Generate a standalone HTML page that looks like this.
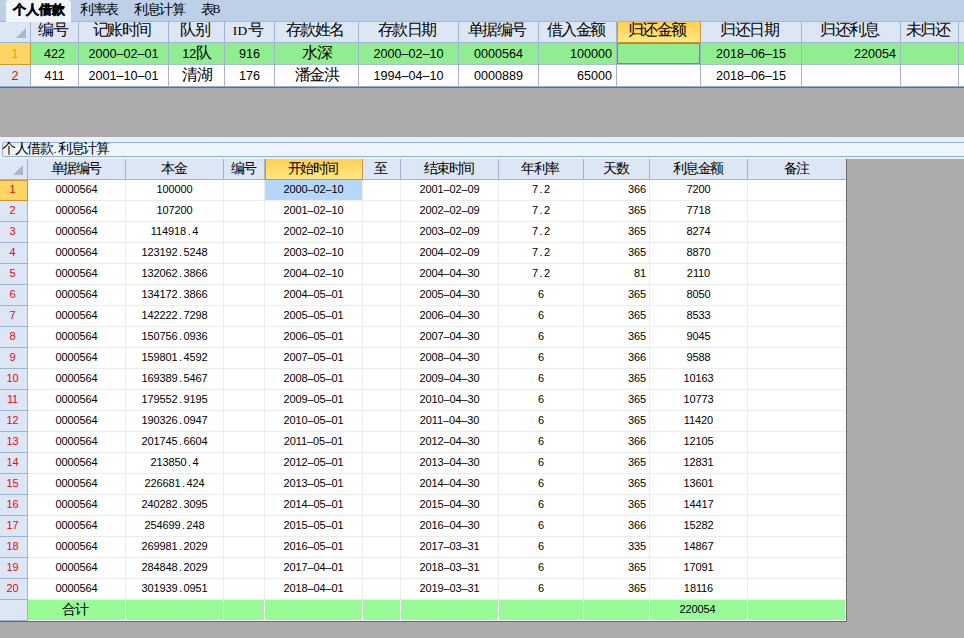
<!DOCTYPE html><html><head><meta charset="utf-8"><style>
html,body{margin:0;padding:0}
body{width:964px;height:638px;overflow:hidden;background:#ABABAB;position:relative;font-family:"Liberation Sans",sans-serif;color:#000}
body>div{position:absolute;white-space:nowrap}
.t12{font-size:13.5px;line-height:20px;letter-spacing:-1.5px}
.t12b{font-size:13px;line-height:16px;font-weight:bold;letter-spacing:0px;-webkit-text-stroke:0.5px #000}
.t14{font-size:15.5px;line-height:20px;letter-spacing:-1.5px}
.m14{font-size:12.6px;letter-spacing:0px;line-height:22px}
.m12{font-size:11px;letter-spacing:-0.1px;line-height:20px}
.m14 i{display:inline-block;width:7px;text-align:center;font-style:normal}
.m12 i{display:inline-block;width:6px;text-align:center;font-style:normal}
.sID{font-family:"Liberation Serif",serif;font-size:13.5px;letter-spacing:0.5px}
.mB{font-family:"Liberation Serif",serif;font-size:12px;letter-spacing:0;position:relative;top:-1px;left:-1px}
</style></head><body>
<div style="left:0px;top:0px;width:964px;height:21px;background:#BED0E8"></div>
<div style="left:0px;top:21px;width:964px;height:1px;background:#A9B6C6"></div>
<div style="left:6px;top:0;width:65px;height:22px;background:#F2F6FC;clip-path:polygon(2px 0,63px 0,65px 2px,65px 22px,0 22px,0 2px)"></div>
<div class="t12b" style="left:13px;top:2px">个人借款</div>
<div class="t12" style="left:80px;top:0px">利率表</div>
<div class="t12" style="left:134px;top:0px">利息计算</div>
<div class="t12" style="left:201px;top:0px">表<span class="mB">B</span></div>
<div style="left:0px;top:22px;width:964px;height:20px;background:#DCE6F4"></div>
<div style="left:0px;top:42px;width:964px;height:1px;background:#9EB4D0"></div>
<svg style="position:absolute;left:0;top:22px" width="30" height="20"><polygon points="16,16 26,16 26,6" fill="#A8B8D2"/></svg>
<div style="left:31px;top:43px;width:933px;height:21px;background:#90EE90"></div>
<div style="left:31px;top:65px;width:933px;height:21px;background:#fff"></div>
<div style="left:0px;top:64px;width:964px;height:1px;background:#A9BED9"></div>
<div style="left:0px;top:86px;width:964px;height:1px;background:#8FB0DA"></div>
<div style="left:0px;top:87px;width:964px;height:1px;background:#6E6E6E"></div>
<div style="left:0px;top:65px;width:30px;height:21px;background:#DCE6F4"></div>
<div style="left:30px;top:22px;width:1px;height:65px;background:#9EB4D0"></div>
<div style="left:78px;top:22px;width:1px;height:65px;background:#9EB4D0"></div>
<div style="left:168px;top:22px;width:1px;height:65px;background:#9EB4D0"></div>
<div style="left:224px;top:22px;width:1px;height:65px;background:#9EB4D0"></div>
<div style="left:274px;top:22px;width:1px;height:65px;background:#9EB4D0"></div>
<div style="left:358px;top:22px;width:1px;height:65px;background:#9EB4D0"></div>
<div style="left:458px;top:22px;width:1px;height:65px;background:#9EB4D0"></div>
<div style="left:538px;top:22px;width:1px;height:65px;background:#9EB4D0"></div>
<div style="left:616px;top:22px;width:1px;height:65px;background:#9EB4D0"></div>
<div style="left:700px;top:22px;width:1px;height:65px;background:#9EB4D0"></div>
<div style="left:801px;top:22px;width:1px;height:65px;background:#9EB4D0"></div>
<div style="left:900px;top:22px;width:1px;height:65px;background:#9EB4D0"></div>
<div style="left:958px;top:22px;width:1px;height:65px;background:#9EB4D0"></div>
<div style="left:0px;top:43px;width:31px;height:22px;background:#FFD666;box-sizing:border-box;border-bottom:1px solid #D4952E;border-right:1px solid #D4952E"></div>
<div style="left:617px;top:22px;width:84px;height:21px;background:linear-gradient(#FFCF52,#FFE884);box-sizing:border-box;border:1px solid #D4952E;border-top:none"></div>
<div class="t14" style="left:29px;top:20px;width:47px;text-align:center">编号</div>
<div class="t14" style="left:77px;top:20px;width:89px;text-align:center">记账时间</div>
<div class="t14" style="left:167px;top:20px;width:55px;text-align:center">队别</div>
<div class="t14" style="left:223px;top:20px;width:49px;text-align:center"><span class="sID">ID</span>号</div>
<div class="t14" style="left:273px;top:20px;width:83px;text-align:center">存款姓名</div>
<div class="t14" style="left:357px;top:20px;width:99px;text-align:center">存款日期</div>
<div class="t14" style="left:457px;top:20px;width:79px;text-align:center">单据编号</div>
<div class="t14" style="left:537px;top:20px;width:77px;text-align:center">借入金额</div>
<div class="t14" style="left:615px;top:20px;width:83px;text-align:center">归还金额</div>
<div class="t14" style="left:699px;top:20px;width:100px;text-align:center">归还日期</div>
<div class="t14" style="left:800px;top:20px;width:98px;text-align:center">归还利息</div>
<div class="t14" style="left:899px;top:20px;width:57px;text-align:center">未归还</div>
<div style="left:617px;top:43px;width:83px;height:21px;box-sizing:border-box;border:1px solid #3D95E8"></div>
<div class="m14" style="left:0;top:43px;width:30px;text-align:center;color:#F5A000">1</div>
<div class="m14" style="left:0;top:65px;width:30px;text-align:center;color:#FF0000">2</div>
<div class="t14" style="left:31px;top:43px;width:47px;text-align:center"><span class="m14">422</span></div>
<div class="t14" style="left:79px;top:43px;width:89px;text-align:center"><span class="m14">2000<i>&#8211;</i>02<i>&#8211;</i>01</span></div>
<div class="t14" style="left:169px;top:43px;width:55px;text-align:center"><span class="m14">12</span>队</div>
<div class="t14" style="left:225px;top:43px;width:49px;text-align:center"><span class="m14">916</span></div>
<div class="t14" style="left:275px;top:43px;width:83px;text-align:center">水深</div>
<div class="t14" style="left:359px;top:43px;width:99px;text-align:center"><span class="m14">2000<i>&#8211;</i>02<i>&#8211;</i>10</span></div>
<div class="t14" style="left:459px;top:43px;width:79px;text-align:center"><span class="m14">0000564</span></div>
<div class="t14" style="left:539px;top:43px;width:77px;text-align:right;padding-right:4px;box-sizing:border-box"><span class="m14">100000</span></div>
<div class="t14" style="left:701px;top:43px;width:100px;text-align:center"><span class="m14">2018<i>&#8211;</i>06<i>&#8211;</i>15</span></div>
<div class="t14" style="left:802px;top:43px;width:98px;text-align:right;padding-right:4px;box-sizing:border-box"><span class="m14">220054</span></div>
<div class="t14" style="left:31px;top:65px;width:47px;text-align:center"><span class="m14">411</span></div>
<div class="t14" style="left:79px;top:65px;width:89px;text-align:center"><span class="m14">2001<i>&#8211;</i>10<i>&#8211;</i>01</span></div>
<div class="t14" style="left:169px;top:65px;width:55px;text-align:center">清湖</div>
<div class="t14" style="left:225px;top:65px;width:49px;text-align:center"><span class="m14">176</span></div>
<div class="t14" style="left:275px;top:65px;width:83px;text-align:center">潘金洪</div>
<div class="t14" style="left:359px;top:65px;width:99px;text-align:center"><span class="m14">1994<i>&#8211;</i>04<i>&#8211;</i>10</span></div>
<div class="t14" style="left:459px;top:65px;width:79px;text-align:center"><span class="m14">0000889</span></div>
<div class="t14" style="left:539px;top:65px;width:77px;text-align:right;padding-right:4px;box-sizing:border-box"><span class="m14">65000</span></div>
<div class="t14" style="left:701px;top:65px;width:100px;text-align:center"><span class="m14">2018<i>&#8211;</i>06<i>&#8211;</i>15</span></div>
<div style="left:0px;top:137px;width:964px;height:22px;background:#EAF1FB"></div>
<div style="left:2px;top:142px;width:970px;height:15px;box-sizing:border-box;border:1px solid #8DB2E3;border-radius:2px;background:#EEF4FC"></div>
<div class="t12" style="left:2px;top:139px">个人借款<span class="m12"><i>.</i></span>利息计算</div>
<div style="left:0px;top:159px;width:846px;height:20px;background:#DCE6F4"></div>
<div style="left:0px;top:179px;width:846px;height:1px;background:#9EB4D0"></div>
<svg style="position:absolute;left:0;top:159px" width="27" height="20"><polygon points="13,16 23,16 23,6" fill="#A8B8D2"/></svg>
<div style="left:28px;top:180px;width:818px;height:420px;background:#fff"></div>
<div style="left:0px;top:180px;width:27px;height:441px;background:#DCE6F4"></div>
<div style="left:28px;top:200px;width:818px;height:1px;background:#ECECEC"></div>
<div style="left:0px;top:200px;width:27px;height:1px;background:#9EB4D0"></div>
<div style="left:28px;top:221px;width:818px;height:1px;background:#ECECEC"></div>
<div style="left:0px;top:221px;width:27px;height:1px;background:#9EB4D0"></div>
<div style="left:28px;top:242px;width:818px;height:1px;background:#ECECEC"></div>
<div style="left:0px;top:242px;width:27px;height:1px;background:#9EB4D0"></div>
<div style="left:28px;top:263px;width:818px;height:1px;background:#ECECEC"></div>
<div style="left:0px;top:263px;width:27px;height:1px;background:#9EB4D0"></div>
<div style="left:28px;top:284px;width:818px;height:1px;background:#ECECEC"></div>
<div style="left:0px;top:284px;width:27px;height:1px;background:#9EB4D0"></div>
<div style="left:28px;top:305px;width:818px;height:1px;background:#ECECEC"></div>
<div style="left:0px;top:305px;width:27px;height:1px;background:#9EB4D0"></div>
<div style="left:28px;top:326px;width:818px;height:1px;background:#ECECEC"></div>
<div style="left:0px;top:326px;width:27px;height:1px;background:#9EB4D0"></div>
<div style="left:28px;top:347px;width:818px;height:1px;background:#ECECEC"></div>
<div style="left:0px;top:347px;width:27px;height:1px;background:#9EB4D0"></div>
<div style="left:28px;top:368px;width:818px;height:1px;background:#ECECEC"></div>
<div style="left:0px;top:368px;width:27px;height:1px;background:#9EB4D0"></div>
<div style="left:28px;top:389px;width:818px;height:1px;background:#ECECEC"></div>
<div style="left:0px;top:389px;width:27px;height:1px;background:#9EB4D0"></div>
<div style="left:28px;top:410px;width:818px;height:1px;background:#ECECEC"></div>
<div style="left:0px;top:410px;width:27px;height:1px;background:#9EB4D0"></div>
<div style="left:28px;top:431px;width:818px;height:1px;background:#ECECEC"></div>
<div style="left:0px;top:431px;width:27px;height:1px;background:#9EB4D0"></div>
<div style="left:28px;top:452px;width:818px;height:1px;background:#ECECEC"></div>
<div style="left:0px;top:452px;width:27px;height:1px;background:#9EB4D0"></div>
<div style="left:28px;top:473px;width:818px;height:1px;background:#ECECEC"></div>
<div style="left:0px;top:473px;width:27px;height:1px;background:#9EB4D0"></div>
<div style="left:28px;top:494px;width:818px;height:1px;background:#ECECEC"></div>
<div style="left:0px;top:494px;width:27px;height:1px;background:#9EB4D0"></div>
<div style="left:28px;top:515px;width:818px;height:1px;background:#ECECEC"></div>
<div style="left:0px;top:515px;width:27px;height:1px;background:#9EB4D0"></div>
<div style="left:28px;top:536px;width:818px;height:1px;background:#ECECEC"></div>
<div style="left:0px;top:536px;width:27px;height:1px;background:#9EB4D0"></div>
<div style="left:28px;top:557px;width:818px;height:1px;background:#ECECEC"></div>
<div style="left:0px;top:557px;width:27px;height:1px;background:#9EB4D0"></div>
<div style="left:28px;top:578px;width:818px;height:1px;background:#ECECEC"></div>
<div style="left:0px;top:578px;width:27px;height:1px;background:#9EB4D0"></div>
<div style="left:28px;top:599px;width:818px;height:1px;background:#ECECEC"></div>
<div style="left:0px;top:599px;width:27px;height:1px;background:#9EB4D0"></div>
<div style="left:28px;top:600px;width:818px;height:20px;background:#98FB98"></div>
<div style="left:28px;top:620px;width:818px;height:1px;background:#fff"></div>
<div style="left:0px;top:620px;width:27px;height:1px;background:#9EB4D0"></div>
<div style="left:125px;top:159px;width:1px;height:21px;background:#9EB4D0"></div>
<div style="left:125px;top:180px;width:1px;height:420px;background:#ECECEC"></div>
<div style="left:125px;top:600px;width:1px;height:20px;background:#fff"></div>
<div style="left:223px;top:159px;width:1px;height:21px;background:#9EB4D0"></div>
<div style="left:223px;top:180px;width:1px;height:420px;background:#ECECEC"></div>
<div style="left:223px;top:600px;width:1px;height:20px;background:#fff"></div>
<div style="left:264px;top:159px;width:1px;height:21px;background:#9EB4D0"></div>
<div style="left:264px;top:180px;width:1px;height:420px;background:#ECECEC"></div>
<div style="left:264px;top:600px;width:1px;height:20px;background:#fff"></div>
<div style="left:362px;top:159px;width:1px;height:21px;background:#9EB4D0"></div>
<div style="left:362px;top:180px;width:1px;height:420px;background:#ECECEC"></div>
<div style="left:362px;top:600px;width:1px;height:20px;background:#fff"></div>
<div style="left:400px;top:159px;width:1px;height:21px;background:#9EB4D0"></div>
<div style="left:400px;top:180px;width:1px;height:420px;background:#ECECEC"></div>
<div style="left:400px;top:600px;width:1px;height:20px;background:#fff"></div>
<div style="left:498px;top:159px;width:1px;height:21px;background:#9EB4D0"></div>
<div style="left:498px;top:180px;width:1px;height:420px;background:#ECECEC"></div>
<div style="left:498px;top:600px;width:1px;height:20px;background:#fff"></div>
<div style="left:583px;top:159px;width:1px;height:21px;background:#9EB4D0"></div>
<div style="left:583px;top:180px;width:1px;height:420px;background:#ECECEC"></div>
<div style="left:583px;top:600px;width:1px;height:20px;background:#fff"></div>
<div style="left:649px;top:159px;width:1px;height:21px;background:#9EB4D0"></div>
<div style="left:649px;top:180px;width:1px;height:420px;background:#ECECEC"></div>
<div style="left:649px;top:600px;width:1px;height:20px;background:#fff"></div>
<div style="left:747px;top:159px;width:1px;height:21px;background:#9EB4D0"></div>
<div style="left:747px;top:180px;width:1px;height:420px;background:#ECECEC"></div>
<div style="left:747px;top:600px;width:1px;height:20px;background:#fff"></div>
<div style="left:845px;top:600px;width:1px;height:21px;background:#fff"></div>
<div style="left:27px;top:159px;width:1px;height:462px;background:#9EB4D0"></div>
<div style="left:265px;top:159px;width:98px;height:21px;background:linear-gradient(#FFCF52,#FFE884);box-sizing:border-box;border:1px solid #D4952E;border-top:none"></div>
<div style="left:0px;top:180px;width:28px;height:21px;background:#FFD666;box-sizing:border-box;border:1px solid #D4952E;border-left:none"></div>
<div style="left:265px;top:180px;width:97px;height:20px;background:#B5D7FA"></div>
<div style="left:846px;top:159px;width:1px;height:463px;background:#6A6A6A"></div>
<div style="left:0px;top:621px;width:847px;height:1px;background:#6A6A6A"></div>
<div class="t12" style="left:27px;top:159px;width:97px;text-align:center">单据编号</div>
<div class="t12" style="left:125px;top:159px;width:97px;text-align:center">本金</div>
<div class="t12" style="left:223px;top:159px;width:40px;text-align:center">编号</div>
<div class="t12" style="left:264px;top:159px;width:97px;text-align:center">开始时间</div>
<div class="t12" style="left:362px;top:159px;width:37px;text-align:center">至</div>
<div class="t12" style="left:400px;top:159px;width:97px;text-align:center">结束时间</div>
<div class="t12" style="left:498px;top:159px;width:84px;text-align:center">年利率</div>
<div class="t12" style="left:583px;top:159px;width:65px;text-align:center">天数</div>
<div class="t12" style="left:649px;top:159px;width:97px;text-align:center">利息金额</div>
<div class="t12" style="left:747px;top:159px;width:98px;text-align:center">备注</div>
<div class="m12" style="left:-1px;top:179px;width:27px;text-align:center;color:#FF0000">1</div>
<div class="t12" style="left:28px;top:179px;width:97px;text-align:center"><span class="m12">0000564</span></div>
<div class="t12" style="left:126px;top:179px;width:97px;text-align:center"><span class="m12">100000</span></div>
<div class="t12" style="left:265px;top:179px;width:97px;text-align:center"><span class="m12">2000<i>&#8211;</i>02<i>&#8211;</i>10</span></div>
<div class="t12" style="left:401px;top:179px;width:97px;text-align:center"><span class="m12">2001<i>&#8211;</i>02<i>&#8211;</i>09</span></div>
<div class="t12" style="left:499px;top:179px;width:84px;text-align:center"><span class="m12">7<i>.</i>2</span></div>
<div class="t12" style="left:584px;top:179px;width:65px;text-align:right;padding-right:3px;box-sizing:border-box"><span class="m12">366</span></div>
<div class="t12" style="left:650px;top:179px;width:97px;text-align:center"><span class="m12">7200</span></div>
<div class="m12" style="left:-1px;top:200px;width:27px;text-align:center;color:#FF0000">2</div>
<div class="t12" style="left:28px;top:200px;width:97px;text-align:center"><span class="m12">0000564</span></div>
<div class="t12" style="left:126px;top:200px;width:97px;text-align:center"><span class="m12">107200</span></div>
<div class="t12" style="left:265px;top:200px;width:97px;text-align:center"><span class="m12">2001<i>&#8211;</i>02<i>&#8211;</i>10</span></div>
<div class="t12" style="left:401px;top:200px;width:97px;text-align:center"><span class="m12">2002<i>&#8211;</i>02<i>&#8211;</i>09</span></div>
<div class="t12" style="left:499px;top:200px;width:84px;text-align:center"><span class="m12">7<i>.</i>2</span></div>
<div class="t12" style="left:584px;top:200px;width:65px;text-align:right;padding-right:3px;box-sizing:border-box"><span class="m12">365</span></div>
<div class="t12" style="left:650px;top:200px;width:97px;text-align:center"><span class="m12">7718</span></div>
<div class="m12" style="left:-1px;top:221px;width:27px;text-align:center;color:#FF0000">3</div>
<div class="t12" style="left:28px;top:221px;width:97px;text-align:center"><span class="m12">0000564</span></div>
<div class="t12" style="left:126px;top:221px;width:97px;text-align:center"><span class="m12">114918<i>.</i>4</span></div>
<div class="t12" style="left:265px;top:221px;width:97px;text-align:center"><span class="m12">2002<i>&#8211;</i>02<i>&#8211;</i>10</span></div>
<div class="t12" style="left:401px;top:221px;width:97px;text-align:center"><span class="m12">2003<i>&#8211;</i>02<i>&#8211;</i>09</span></div>
<div class="t12" style="left:499px;top:221px;width:84px;text-align:center"><span class="m12">7<i>.</i>2</span></div>
<div class="t12" style="left:584px;top:221px;width:65px;text-align:right;padding-right:3px;box-sizing:border-box"><span class="m12">365</span></div>
<div class="t12" style="left:650px;top:221px;width:97px;text-align:center"><span class="m12">8274</span></div>
<div class="m12" style="left:-1px;top:242px;width:27px;text-align:center;color:#FF0000">4</div>
<div class="t12" style="left:28px;top:242px;width:97px;text-align:center"><span class="m12">0000564</span></div>
<div class="t12" style="left:126px;top:242px;width:97px;text-align:center"><span class="m12">123192<i>.</i>5248</span></div>
<div class="t12" style="left:265px;top:242px;width:97px;text-align:center"><span class="m12">2003<i>&#8211;</i>02<i>&#8211;</i>10</span></div>
<div class="t12" style="left:401px;top:242px;width:97px;text-align:center"><span class="m12">2004<i>&#8211;</i>02<i>&#8211;</i>09</span></div>
<div class="t12" style="left:499px;top:242px;width:84px;text-align:center"><span class="m12">7<i>.</i>2</span></div>
<div class="t12" style="left:584px;top:242px;width:65px;text-align:right;padding-right:3px;box-sizing:border-box"><span class="m12">365</span></div>
<div class="t12" style="left:650px;top:242px;width:97px;text-align:center"><span class="m12">8870</span></div>
<div class="m12" style="left:-1px;top:263px;width:27px;text-align:center;color:#FF0000">5</div>
<div class="t12" style="left:28px;top:263px;width:97px;text-align:center"><span class="m12">0000564</span></div>
<div class="t12" style="left:126px;top:263px;width:97px;text-align:center"><span class="m12">132062<i>.</i>3866</span></div>
<div class="t12" style="left:265px;top:263px;width:97px;text-align:center"><span class="m12">2004<i>&#8211;</i>02<i>&#8211;</i>10</span></div>
<div class="t12" style="left:401px;top:263px;width:97px;text-align:center"><span class="m12">2004<i>&#8211;</i>04<i>&#8211;</i>30</span></div>
<div class="t12" style="left:499px;top:263px;width:84px;text-align:center"><span class="m12">7<i>.</i>2</span></div>
<div class="t12" style="left:584px;top:263px;width:65px;text-align:right;padding-right:3px;box-sizing:border-box"><span class="m12">81</span></div>
<div class="t12" style="left:650px;top:263px;width:97px;text-align:center"><span class="m12">2110</span></div>
<div class="m12" style="left:-1px;top:284px;width:27px;text-align:center;color:#FF0000">6</div>
<div class="t12" style="left:28px;top:284px;width:97px;text-align:center"><span class="m12">0000564</span></div>
<div class="t12" style="left:126px;top:284px;width:97px;text-align:center"><span class="m12">134172<i>.</i>3866</span></div>
<div class="t12" style="left:265px;top:284px;width:97px;text-align:center"><span class="m12">2004<i>&#8211;</i>05<i>&#8211;</i>01</span></div>
<div class="t12" style="left:401px;top:284px;width:97px;text-align:center"><span class="m12">2005<i>&#8211;</i>04<i>&#8211;</i>30</span></div>
<div class="t12" style="left:499px;top:284px;width:84px;text-align:center"><span class="m12">6</span></div>
<div class="t12" style="left:584px;top:284px;width:65px;text-align:right;padding-right:3px;box-sizing:border-box"><span class="m12">365</span></div>
<div class="t12" style="left:650px;top:284px;width:97px;text-align:center"><span class="m12">8050</span></div>
<div class="m12" style="left:-1px;top:305px;width:27px;text-align:center;color:#FF0000">7</div>
<div class="t12" style="left:28px;top:305px;width:97px;text-align:center"><span class="m12">0000564</span></div>
<div class="t12" style="left:126px;top:305px;width:97px;text-align:center"><span class="m12">142222<i>.</i>7298</span></div>
<div class="t12" style="left:265px;top:305px;width:97px;text-align:center"><span class="m12">2005<i>&#8211;</i>05<i>&#8211;</i>01</span></div>
<div class="t12" style="left:401px;top:305px;width:97px;text-align:center"><span class="m12">2006<i>&#8211;</i>04<i>&#8211;</i>30</span></div>
<div class="t12" style="left:499px;top:305px;width:84px;text-align:center"><span class="m12">6</span></div>
<div class="t12" style="left:584px;top:305px;width:65px;text-align:right;padding-right:3px;box-sizing:border-box"><span class="m12">365</span></div>
<div class="t12" style="left:650px;top:305px;width:97px;text-align:center"><span class="m12">8533</span></div>
<div class="m12" style="left:-1px;top:326px;width:27px;text-align:center;color:#FF0000">8</div>
<div class="t12" style="left:28px;top:326px;width:97px;text-align:center"><span class="m12">0000564</span></div>
<div class="t12" style="left:126px;top:326px;width:97px;text-align:center"><span class="m12">150756<i>.</i>0936</span></div>
<div class="t12" style="left:265px;top:326px;width:97px;text-align:center"><span class="m12">2006<i>&#8211;</i>05<i>&#8211;</i>01</span></div>
<div class="t12" style="left:401px;top:326px;width:97px;text-align:center"><span class="m12">2007<i>&#8211;</i>04<i>&#8211;</i>30</span></div>
<div class="t12" style="left:499px;top:326px;width:84px;text-align:center"><span class="m12">6</span></div>
<div class="t12" style="left:584px;top:326px;width:65px;text-align:right;padding-right:3px;box-sizing:border-box"><span class="m12">365</span></div>
<div class="t12" style="left:650px;top:326px;width:97px;text-align:center"><span class="m12">9045</span></div>
<div class="m12" style="left:-1px;top:347px;width:27px;text-align:center;color:#FF0000">9</div>
<div class="t12" style="left:28px;top:347px;width:97px;text-align:center"><span class="m12">0000564</span></div>
<div class="t12" style="left:126px;top:347px;width:97px;text-align:center"><span class="m12">159801<i>.</i>4592</span></div>
<div class="t12" style="left:265px;top:347px;width:97px;text-align:center"><span class="m12">2007<i>&#8211;</i>05<i>&#8211;</i>01</span></div>
<div class="t12" style="left:401px;top:347px;width:97px;text-align:center"><span class="m12">2008<i>&#8211;</i>04<i>&#8211;</i>30</span></div>
<div class="t12" style="left:499px;top:347px;width:84px;text-align:center"><span class="m12">6</span></div>
<div class="t12" style="left:584px;top:347px;width:65px;text-align:right;padding-right:3px;box-sizing:border-box"><span class="m12">366</span></div>
<div class="t12" style="left:650px;top:347px;width:97px;text-align:center"><span class="m12">9588</span></div>
<div class="m12" style="left:-1px;top:368px;width:27px;text-align:center;color:#FF0000">10</div>
<div class="t12" style="left:28px;top:368px;width:97px;text-align:center"><span class="m12">0000564</span></div>
<div class="t12" style="left:126px;top:368px;width:97px;text-align:center"><span class="m12">169389<i>.</i>5467</span></div>
<div class="t12" style="left:265px;top:368px;width:97px;text-align:center"><span class="m12">2008<i>&#8211;</i>05<i>&#8211;</i>01</span></div>
<div class="t12" style="left:401px;top:368px;width:97px;text-align:center"><span class="m12">2009<i>&#8211;</i>04<i>&#8211;</i>30</span></div>
<div class="t12" style="left:499px;top:368px;width:84px;text-align:center"><span class="m12">6</span></div>
<div class="t12" style="left:584px;top:368px;width:65px;text-align:right;padding-right:3px;box-sizing:border-box"><span class="m12">365</span></div>
<div class="t12" style="left:650px;top:368px;width:97px;text-align:center"><span class="m12">10163</span></div>
<div class="m12" style="left:-1px;top:389px;width:27px;text-align:center;color:#FF0000">11</div>
<div class="t12" style="left:28px;top:389px;width:97px;text-align:center"><span class="m12">0000564</span></div>
<div class="t12" style="left:126px;top:389px;width:97px;text-align:center"><span class="m12">179552<i>.</i>9195</span></div>
<div class="t12" style="left:265px;top:389px;width:97px;text-align:center"><span class="m12">2009<i>&#8211;</i>05<i>&#8211;</i>01</span></div>
<div class="t12" style="left:401px;top:389px;width:97px;text-align:center"><span class="m12">2010<i>&#8211;</i>04<i>&#8211;</i>30</span></div>
<div class="t12" style="left:499px;top:389px;width:84px;text-align:center"><span class="m12">6</span></div>
<div class="t12" style="left:584px;top:389px;width:65px;text-align:right;padding-right:3px;box-sizing:border-box"><span class="m12">365</span></div>
<div class="t12" style="left:650px;top:389px;width:97px;text-align:center"><span class="m12">10773</span></div>
<div class="m12" style="left:-1px;top:410px;width:27px;text-align:center;color:#FF0000">12</div>
<div class="t12" style="left:28px;top:410px;width:97px;text-align:center"><span class="m12">0000564</span></div>
<div class="t12" style="left:126px;top:410px;width:97px;text-align:center"><span class="m12">190326<i>.</i>0947</span></div>
<div class="t12" style="left:265px;top:410px;width:97px;text-align:center"><span class="m12">2010<i>&#8211;</i>05<i>&#8211;</i>01</span></div>
<div class="t12" style="left:401px;top:410px;width:97px;text-align:center"><span class="m12">2011<i>&#8211;</i>04<i>&#8211;</i>30</span></div>
<div class="t12" style="left:499px;top:410px;width:84px;text-align:center"><span class="m12">6</span></div>
<div class="t12" style="left:584px;top:410px;width:65px;text-align:right;padding-right:3px;box-sizing:border-box"><span class="m12">365</span></div>
<div class="t12" style="left:650px;top:410px;width:97px;text-align:center"><span class="m12">11420</span></div>
<div class="m12" style="left:-1px;top:431px;width:27px;text-align:center;color:#FF0000">13</div>
<div class="t12" style="left:28px;top:431px;width:97px;text-align:center"><span class="m12">0000564</span></div>
<div class="t12" style="left:126px;top:431px;width:97px;text-align:center"><span class="m12">201745<i>.</i>6604</span></div>
<div class="t12" style="left:265px;top:431px;width:97px;text-align:center"><span class="m12">2011<i>&#8211;</i>05<i>&#8211;</i>01</span></div>
<div class="t12" style="left:401px;top:431px;width:97px;text-align:center"><span class="m12">2012<i>&#8211;</i>04<i>&#8211;</i>30</span></div>
<div class="t12" style="left:499px;top:431px;width:84px;text-align:center"><span class="m12">6</span></div>
<div class="t12" style="left:584px;top:431px;width:65px;text-align:right;padding-right:3px;box-sizing:border-box"><span class="m12">366</span></div>
<div class="t12" style="left:650px;top:431px;width:97px;text-align:center"><span class="m12">12105</span></div>
<div class="m12" style="left:-1px;top:452px;width:27px;text-align:center;color:#FF0000">14</div>
<div class="t12" style="left:28px;top:452px;width:97px;text-align:center"><span class="m12">0000564</span></div>
<div class="t12" style="left:126px;top:452px;width:97px;text-align:center"><span class="m12">213850<i>.</i>4</span></div>
<div class="t12" style="left:265px;top:452px;width:97px;text-align:center"><span class="m12">2012<i>&#8211;</i>05<i>&#8211;</i>01</span></div>
<div class="t12" style="left:401px;top:452px;width:97px;text-align:center"><span class="m12">2013<i>&#8211;</i>04<i>&#8211;</i>30</span></div>
<div class="t12" style="left:499px;top:452px;width:84px;text-align:center"><span class="m12">6</span></div>
<div class="t12" style="left:584px;top:452px;width:65px;text-align:right;padding-right:3px;box-sizing:border-box"><span class="m12">365</span></div>
<div class="t12" style="left:650px;top:452px;width:97px;text-align:center"><span class="m12">12831</span></div>
<div class="m12" style="left:-1px;top:473px;width:27px;text-align:center;color:#FF0000">15</div>
<div class="t12" style="left:28px;top:473px;width:97px;text-align:center"><span class="m12">0000564</span></div>
<div class="t12" style="left:126px;top:473px;width:97px;text-align:center"><span class="m12">226681<i>.</i>424</span></div>
<div class="t12" style="left:265px;top:473px;width:97px;text-align:center"><span class="m12">2013<i>&#8211;</i>05<i>&#8211;</i>01</span></div>
<div class="t12" style="left:401px;top:473px;width:97px;text-align:center"><span class="m12">2014<i>&#8211;</i>04<i>&#8211;</i>30</span></div>
<div class="t12" style="left:499px;top:473px;width:84px;text-align:center"><span class="m12">6</span></div>
<div class="t12" style="left:584px;top:473px;width:65px;text-align:right;padding-right:3px;box-sizing:border-box"><span class="m12">365</span></div>
<div class="t12" style="left:650px;top:473px;width:97px;text-align:center"><span class="m12">13601</span></div>
<div class="m12" style="left:-1px;top:494px;width:27px;text-align:center;color:#FF0000">16</div>
<div class="t12" style="left:28px;top:494px;width:97px;text-align:center"><span class="m12">0000564</span></div>
<div class="t12" style="left:126px;top:494px;width:97px;text-align:center"><span class="m12">240282<i>.</i>3095</span></div>
<div class="t12" style="left:265px;top:494px;width:97px;text-align:center"><span class="m12">2014<i>&#8211;</i>05<i>&#8211;</i>01</span></div>
<div class="t12" style="left:401px;top:494px;width:97px;text-align:center"><span class="m12">2015<i>&#8211;</i>04<i>&#8211;</i>30</span></div>
<div class="t12" style="left:499px;top:494px;width:84px;text-align:center"><span class="m12">6</span></div>
<div class="t12" style="left:584px;top:494px;width:65px;text-align:right;padding-right:3px;box-sizing:border-box"><span class="m12">365</span></div>
<div class="t12" style="left:650px;top:494px;width:97px;text-align:center"><span class="m12">14417</span></div>
<div class="m12" style="left:-1px;top:515px;width:27px;text-align:center;color:#FF0000">17</div>
<div class="t12" style="left:28px;top:515px;width:97px;text-align:center"><span class="m12">0000564</span></div>
<div class="t12" style="left:126px;top:515px;width:97px;text-align:center"><span class="m12">254699<i>.</i>248</span></div>
<div class="t12" style="left:265px;top:515px;width:97px;text-align:center"><span class="m12">2015<i>&#8211;</i>05<i>&#8211;</i>01</span></div>
<div class="t12" style="left:401px;top:515px;width:97px;text-align:center"><span class="m12">2016<i>&#8211;</i>04<i>&#8211;</i>30</span></div>
<div class="t12" style="left:499px;top:515px;width:84px;text-align:center"><span class="m12">6</span></div>
<div class="t12" style="left:584px;top:515px;width:65px;text-align:right;padding-right:3px;box-sizing:border-box"><span class="m12">366</span></div>
<div class="t12" style="left:650px;top:515px;width:97px;text-align:center"><span class="m12">15282</span></div>
<div class="m12" style="left:-1px;top:536px;width:27px;text-align:center;color:#FF0000">18</div>
<div class="t12" style="left:28px;top:536px;width:97px;text-align:center"><span class="m12">0000564</span></div>
<div class="t12" style="left:126px;top:536px;width:97px;text-align:center"><span class="m12">269981<i>.</i>2029</span></div>
<div class="t12" style="left:265px;top:536px;width:97px;text-align:center"><span class="m12">2016<i>&#8211;</i>05<i>&#8211;</i>01</span></div>
<div class="t12" style="left:401px;top:536px;width:97px;text-align:center"><span class="m12">2017<i>&#8211;</i>03<i>&#8211;</i>31</span></div>
<div class="t12" style="left:499px;top:536px;width:84px;text-align:center"><span class="m12">6</span></div>
<div class="t12" style="left:584px;top:536px;width:65px;text-align:right;padding-right:3px;box-sizing:border-box"><span class="m12">335</span></div>
<div class="t12" style="left:650px;top:536px;width:97px;text-align:center"><span class="m12">14867</span></div>
<div class="m12" style="left:-1px;top:557px;width:27px;text-align:center;color:#FF0000">19</div>
<div class="t12" style="left:28px;top:557px;width:97px;text-align:center"><span class="m12">0000564</span></div>
<div class="t12" style="left:126px;top:557px;width:97px;text-align:center"><span class="m12">284848<i>.</i>2029</span></div>
<div class="t12" style="left:265px;top:557px;width:97px;text-align:center"><span class="m12">2017<i>&#8211;</i>04<i>&#8211;</i>01</span></div>
<div class="t12" style="left:401px;top:557px;width:97px;text-align:center"><span class="m12">2018<i>&#8211;</i>03<i>&#8211;</i>31</span></div>
<div class="t12" style="left:499px;top:557px;width:84px;text-align:center"><span class="m12">6</span></div>
<div class="t12" style="left:584px;top:557px;width:65px;text-align:right;padding-right:3px;box-sizing:border-box"><span class="m12">365</span></div>
<div class="t12" style="left:650px;top:557px;width:97px;text-align:center"><span class="m12">17091</span></div>
<div class="m12" style="left:-1px;top:578px;width:27px;text-align:center;color:#FF0000">20</div>
<div class="t12" style="left:28px;top:578px;width:97px;text-align:center"><span class="m12">0000564</span></div>
<div class="t12" style="left:126px;top:578px;width:97px;text-align:center"><span class="m12">301939<i>.</i>0951</span></div>
<div class="t12" style="left:265px;top:578px;width:97px;text-align:center"><span class="m12">2018<i>&#8211;</i>04<i>&#8211;</i>01</span></div>
<div class="t12" style="left:401px;top:578px;width:97px;text-align:center"><span class="m12">2019<i>&#8211;</i>03<i>&#8211;</i>31</span></div>
<div class="t12" style="left:499px;top:578px;width:84px;text-align:center"><span class="m12">6</span></div>
<div class="t12" style="left:584px;top:578px;width:65px;text-align:right;padding-right:3px;box-sizing:border-box"><span class="m12">365</span></div>
<div class="t12" style="left:650px;top:578px;width:97px;text-align:center"><span class="m12">18116</span></div>
<div class="t12" style="left:26px;top:600px;width:97px;text-align:center">合计</div>
<div class="t12" style="left:649px;top:599px;width:97px;text-align:center"><span class="m12">220054</span></div>
</body></html>
